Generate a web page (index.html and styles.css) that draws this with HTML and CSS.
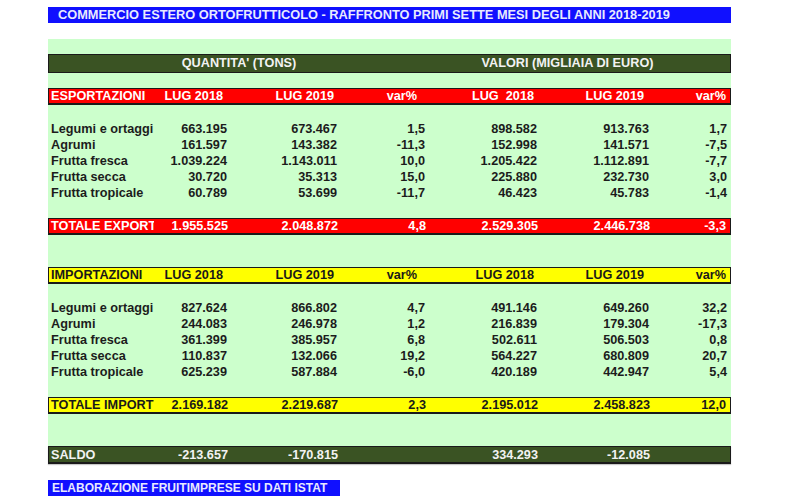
FILE: index.html
```html
<!DOCTYPE html>
<html lang="it">
<head>
<meta charset="utf-8">
<title>Commercio estero ortofrutticolo</title>
<link rel="stylesheet" href="styles.css">
</head>
<body>
<div class="sheet">
  <div class="title">COMMERCIO ESTERO ORTOFRUTTICOLO - RAFFRONTO PRIMI SETTE MESI DEGLI ANNI 2018-2019</div>

  <div class="panel">
    <div class="band">
      <div class="band-q">QUANTITA' (TONS)</div>
      <div class="band-v">VALORI (MIGLIAIA DI EURO)</div>
    </div>

    <div class="row bar red hdr gap-a">
      <div class="lbl">ESPORTAZIONI</div>
      <div class="h1">LUG 2018</div>
      <div class="h2">LUG 2019</div>
      <div class="h3">var%</div>
      <div class="h4">LUG&nbsp; 2018</div>
      <div class="h5">LUG 2019</div>
      <div class="h6">var%</div>
    </div>

    <div class="rows">
      <div class="row"><div class="lbl">Legumi e ortaggi</div><div>663.195</div><div>673.467</div><div>1,5</div><div>898.582</div><div>913.763</div><div>1,7</div></div>
      <div class="row"><div class="lbl">Agrumi</div><div>161.597</div><div>143.382</div><div>-11,3</div><div>152.998</div><div>141.571</div><div>-7,5</div></div>
      <div class="row"><div class="lbl">Frutta fresca</div><div>1.039.224</div><div>1.143.011</div><div>10,0</div><div>1.205.422</div><div>1.112.891</div><div>-7,7</div></div>
      <div class="row"><div class="lbl">Frutta secca</div><div>30.720</div><div>35.313</div><div>15,0</div><div>225.880</div><div>232.730</div><div>3,0</div></div>
      <div class="row"><div class="lbl">Frutta tropicale</div><div>60.789</div><div>53.699</div><div>-11,7</div><div>46.423</div><div>45.783</div><div>-1,4</div></div>
    </div>

    <div class="row bar red total">
      <div class="lbl clip">TOTALE EXPORT</div><div>1.955.525</div><div>2.048.872</div><div>4,8</div><div>2.529.305</div><div>2.446.738</div><div>-3,3</div>
    </div>

    <div class="row bar yellow hdr gap-b">
      <div class="lbl">IMPORTAZIONI</div>
      <div class="h1">LUG 2018</div>
      <div class="h2">LUG 2019</div>
      <div class="h3">var%</div>
      <div class="h4">LUG 2018</div>
      <div class="h5">LUG 2019</div>
      <div class="h6">var%</div>
    </div>

    <div class="rows">
      <div class="row"><div class="lbl">Legumi e ortaggi</div><div>827.624</div><div>866.802</div><div>4,7</div><div>491.146</div><div>649.260</div><div>32,2</div></div>
      <div class="row"><div class="lbl">Agrumi</div><div>244.083</div><div>246.978</div><div>1,2</div><div>216.839</div><div>179.304</div><div>-17,3</div></div>
      <div class="row"><div class="lbl">Frutta fresca</div><div>361.399</div><div>385.957</div><div>6,8</div><div>502.611</div><div>506.503</div><div>0,8</div></div>
      <div class="row"><div class="lbl">Frutta secca</div><div>110.837</div><div>132.066</div><div>19,2</div><div>564.227</div><div>680.809</div><div>20,7</div></div>
      <div class="row"><div class="lbl">Frutta tropicale</div><div>625.239</div><div>587.884</div><div>-6,0</div><div>420.189</div><div>442.947</div><div>5,4</div></div>
    </div>

    <div class="row bar yellow total">
      <div class="lbl">TOTALE IMPORT</div><div>2.169.182</div><div>2.219.687</div><div>2,3</div><div>2.195.012</div><div>2.458.823</div><div>12,0</div>
    </div>

    <div class="row bar dark saldo">
      <div class="lbl">SALDO</div><div>-213.657</div><div>-170.815</div><div></div><div>334.293</div><div>-12.085</div><div></div>
    </div>
  </div>

  <div class="source">ELABORAZIONE FRUITIMPRESE SU DATI ISTAT</div>
</div>
</body>
</html>
```

FILE: styles.css
```css
html, body {
  margin: 0;
  padding: 0;
  background: #ffffff;
}

body {
  font-family: "Liberation Sans", Arial, sans-serif;
  font-weight: bold;
  font-size: 12.7px;
  color: #1c1c1c;
}

.sheet {
  margin-left: 48px;
  width: 684px;
  padding-top: 7px;
}

.title {
  width: 683px;
  height: 16px;
  line-height: 16px;
  background: #1010ff;
  color: #e8eaff;
  padding-left: 10px;
  box-sizing: border-box;
  font-size: 12.8px;
  white-space: nowrap;
}

.panel {
  margin-top: 16px;
  width: 683px;
  background: #ccffcc;
  padding-top: 15px;
}

.band {
  display: grid;
  grid-template-columns: 380px 1fr;
  height: 19px;
  line-height: 17px;
  box-sizing: border-box;
  border: 1px solid #1a1a1a;
  background: #3a5323;
  color: #f2f2f2;
}

.band-q {
  text-align: center;
}

.band-v {
  text-align: center;
  padding-right: 24px;
}

.row {
  display: grid;
  grid-template-columns: 107px 75px 110px 88px 112px 112px 1fr;
  height: 16px;
  line-height: 16px;
  white-space: nowrap;
}

.row > div {
  text-align: right;
  padding-right: 3px;
}

.row > div:last-child {
  padding-right: 4px;
}

.row > .lbl {
  text-align: left;
  padding-left: 3px;
  padding-right: 0;
}

.row > .clip {
  overflow: hidden;
  margin-right: 2px;
}

.bar {
  height: 17px;
  line-height: 15px;
  box-sizing: border-box;
  border: 1px solid #1a1a1a;
  border-bottom-width: 2px;
}

.bar > .lbl {
  padding-left: 2px;
}

.red {
  background: #ff0000;
  color: #ffffff;
}

.yellow {
  background: #ffff00;
  color: #1a1a1a;
}

.dark {
  background: #3a5323;
  color: #f2f2f2;
}

.hdr > .h1 { padding-right: 8px; }
.hdr > .h2 { padding-right: 7px; }
.hdr > .h3 { padding-right: 12px; }
.hdr > .h4 { padding-right: 7px; }
.hdr > .h5 { padding-right: 9px; }
.hdr > .h6 { padding-right: 10px; }

.gap-a {
  margin-top: 15px;
}

.gap-b {
  margin-top: 32px;
}

.rows {
  padding-top: 16px;
  padding-bottom: 17px;
}

.saldo {
  margin-top: 32px;
  height: 18px;
  line-height: 16px;
  box-shadow: 0 1px 1px #c8c8c8;
}

.source {
  margin-top: 16px;
  width: 292px;
  height: 16px;
  line-height: 16px;
  background: #1010ff;
  color: #e8eaff;
  padding-left: 4px;
  box-sizing: border-box;
  font-size: 12px;
  white-space: nowrap;
}
```
